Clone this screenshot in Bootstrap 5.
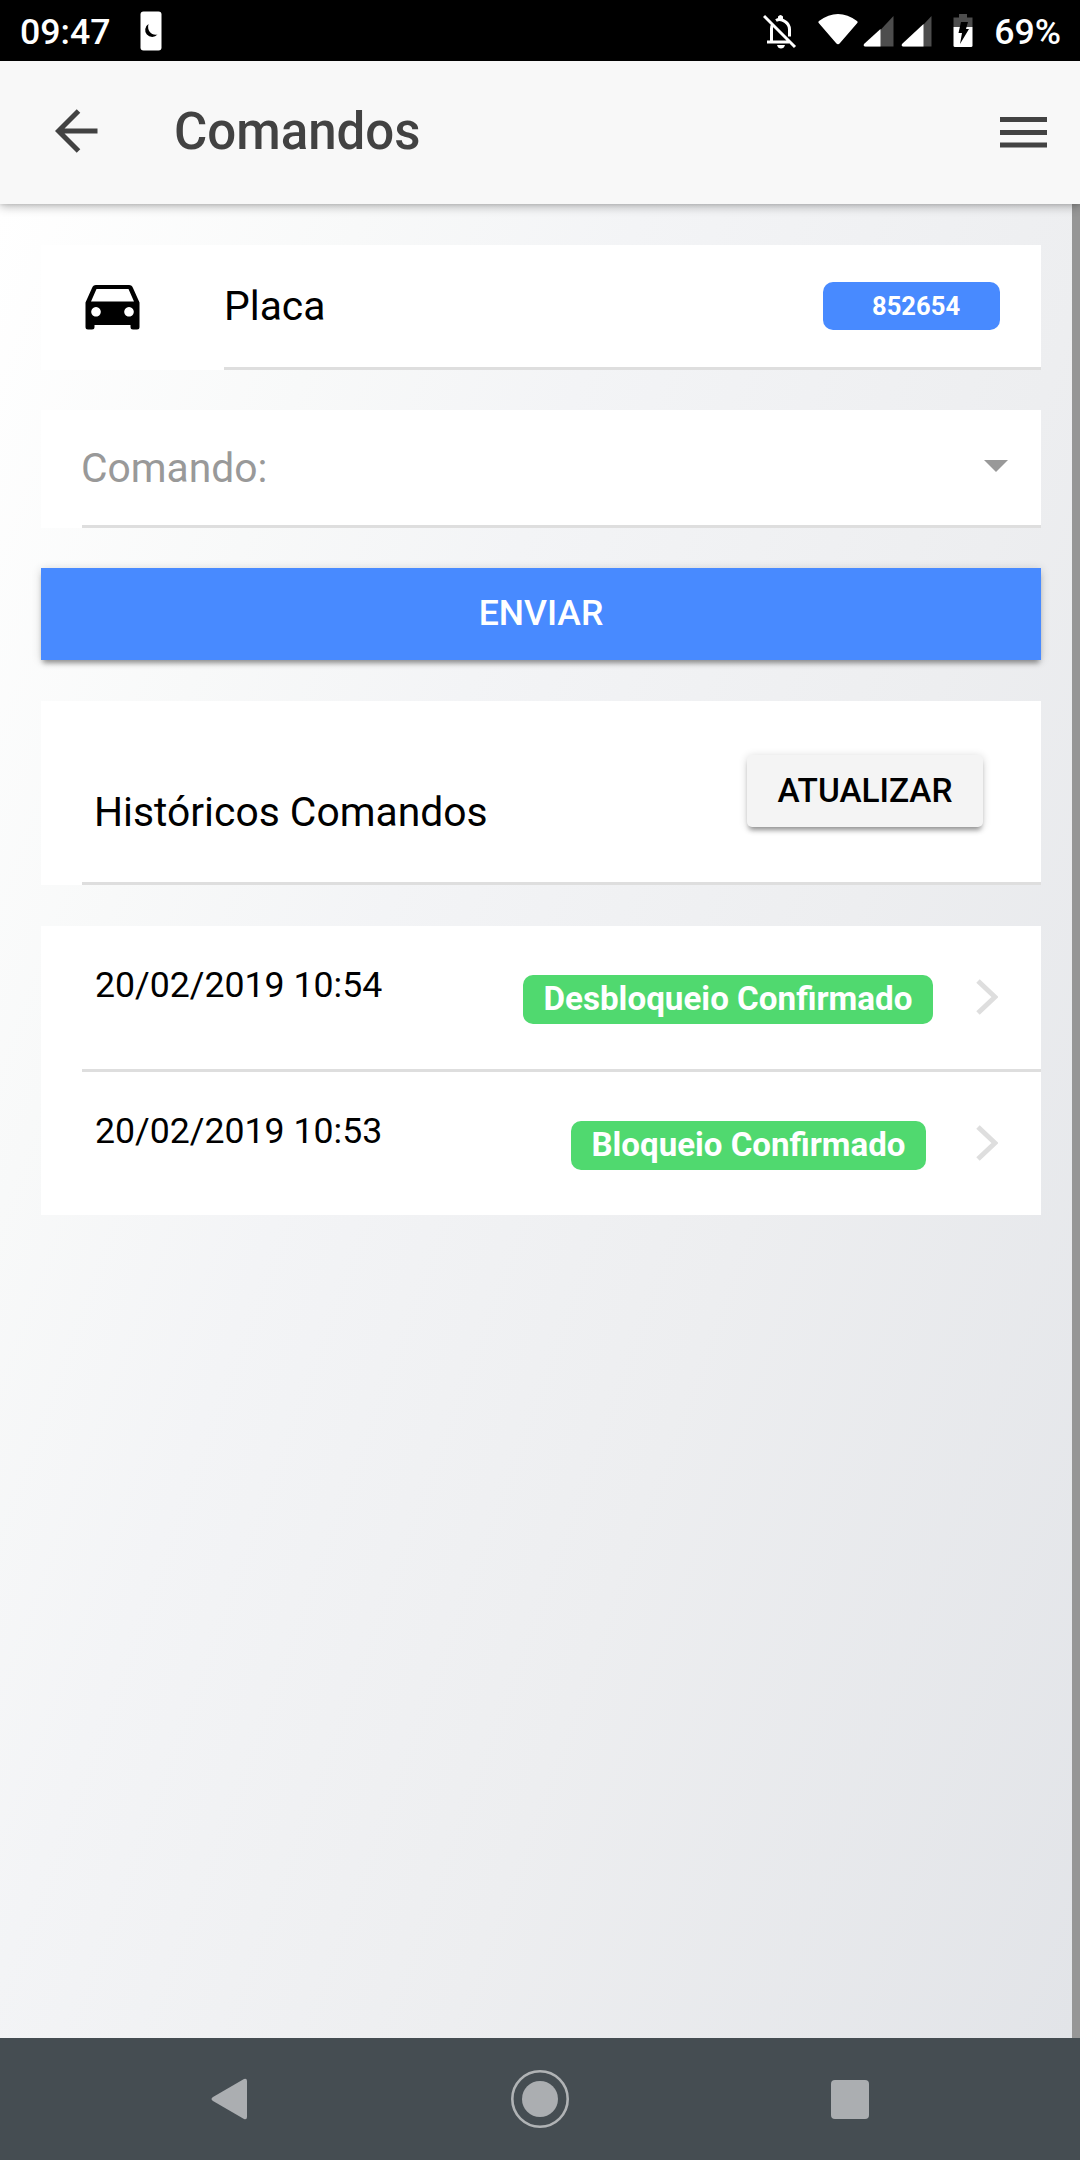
<!DOCTYPE html>
<html lang="pt-BR">
<head>
<meta charset="utf-8">
<meta name="viewport" content="width=device-width, initial-scale=1">
<title>Comandos</title>
<link href="https://cdn.jsdelivr.net/npm/bootstrap@5.3.0/dist/css/bootstrap.min.css" rel="stylesheet">
<style>
  body { font-family: Roboto, "Liberation Sans", sans-serif; color: #000; line-height: 1; overflow: hidden; }
  svg { display: block; flex: none; }
  .phone { width: 1080px; height: 2160px; }
  .statusbar { height: 61px; background: #000; color: #fff; padding: 0 19px 0 20px; font-size: 35.7px; font-weight: 500; }
  .statusbar span { margin-top: 4px; }
  .moon { margin-left: 29px; }
  .bell { margin-right: 21px; margin-top: 1px; }
  .wifi { margin-right: 5px; margin-top: -2px; }
  .sig { margin-right: 7px; margin-top: 1px; }
  .batt { margin-left: 14px; margin-right: 21px; }
  .topbar { height: 143px; background: #f8f8f8; color: #424242; padding: 0 33px 0 55px; z-index: 2;
            box-shadow: 0 2px 10px rgba(0,0,0,.3), 0 1px 3px rgba(0,0,0,.08); }
  .topbar h1 { font-size: 51px; font-weight: 500; margin: -2px 0 0 76px; }
  .back { margin-top: -4px; }
  .burger { margin-top: -1px; }
  .screen { border-right: 8px solid #969696; padding: 41px 31px 0 41px;
            background: linear-gradient(110deg, #ffffff 0%, #f8f9f9 21%, #f3f4f6 37%, #edeef0 64%, #e2e4e8 100%); }
  .panel { background: #fff; margin-bottom: 40px; font-size: 40.8px; }
  .ruled { border-bottom: 3px solid #dedede; }
  .plate { height: 125px; padding-left: 44px; }
  .plate .ruled { margin-left: 84px; padding-right: 41px; }
  .chip { border-radius: 10px; height: 48px; font-weight: 700; font-size: 33.2px; padding: 0 20.5px; color: #fff; background: #50d96f; line-height: 48px; }
  .chip-plate { width: 177px; font-size: 25.6px; background: #488aff; padding: 0 0 0 49px; line-height: 48px; }
  .inset { margin-left: 41px; }
  .picker { height: 118px; color: #999; padding-right: 33px; }
  .picker span { margin-left: -1px; margin-top: 2px; }
  .picker svg { margin-top: -3px; }
  .send { height: 92px; border: 0; border-radius: 0; background: #488aff; color: #fff; font-size: 35.6px; font-weight: 500; margin-bottom: 41px; }
  .raised { box-shadow: 0 5px 5px -2px rgba(0,0,0,.36), 0 1px 9px rgba(0,0,0,.16); }
  .history-panel { margin-bottom: 41px; }
  .history { height: 184px; padding: 0 58px 0 12px; }
  .histlabel { margin-top: 91px; }
  .refresh { width: 236px; height: 72px; border: 0; border-radius: 5px; background: #f4f4f4; color: #000; font-size: 33.4px; font-weight: 500; padding: 0; margin-top: 54px; }
  .entry { height: 146px; padding: 0 43px 0 13px; }
  .entry-last { height: 143px; }
  .stamp { font-size: 35.65px; margin-top: 42px; }
  .entry .chip { margin-top: 49px; height: 49px; margin-right: 43px; }
  .entry-last .chip { margin-right: 50px; font-size: 33.1px; }
  .entry .go { margin-top: 53px; }
  .sysnav { height: 122px; background: #454d52; padding: 0 211px; }
</style>
</head>
<body>
<div class="phone d-flex flex-column">
  <div class="statusbar d-flex align-items-center">
    <span>09:47</span>
    <svg class="moon me-auto" width="22" height="40" viewBox="0 0 22 40"><rect x=".5" y=".5" width="21" height="39" rx="3" fill="#fff"/><path d="M8.500 13a7 7 0 1 0 9 10.500c-5 1.500-11-3-9-10.500z" fill="#000"/></svg>
    <svg class="bell" width="34" height="35" viewBox="0 0 34 35" fill="none" stroke="#fff" stroke-width="3"><path d="M1 2l31 31M4 28h22M8.500 27V15q0-3 1.500-5.500M13 6.500q4-2.500 9 1 4.500 3 4.500 8v7"/><path d="M14 31h8q-1 3.500-4 3.500T14 31zM15 5V2.500q2.500-3 5 0V5z" fill="#fff" stroke="none"/></svg>
    <svg class="wifi" width="40" height="31" viewBox="0 0 40 31"><path d="M1 7Q20-7 39 7q1 1 .3 2L22 29q-2 2.500-4 0L.7 9Q0 8 1 7z" fill="#fff"/></svg>
    <svg class="sig" width="31" height="31" viewBox="0 0 31 31"><path d="M30.500 0v30.500H2z" fill="#4d4d4d"/><path d="M17.500 13v17.500H2q-2-.5-1-2.500z" fill="#fff"/></svg>
    <svg class="sig" width="31" height="31" viewBox="0 0 31 31"><path d="M30.500 0v30.500H2z" fill="#4d4d4d"/><path d="M22.500 8v22.500H2q-2-.5-1-2.500z" fill="#fff"/></svg>
    <svg class="batt" width="20" height="33" viewBox="0 0 20 33"><path d="M6 0h8v3.500h5.500V13H.5V3.500H6z" fill="#4d4d4d"/><path d="M.5 13h19v18.500q0 1.500-1.500 1.500H2q-1.500 0-1.500-1.500z" fill="#fff"/><path d="M8 8h7l-2 7h3L7 30l2-11H5.500z" fill="#000"/></svg>
    <span>69%</span>
  </div>
  <header class="topbar d-flex align-items-center position-relative">
    <svg class="back" width="43" height="44" viewBox="0 0 43 44" fill="none" stroke="#424242" stroke-width="5"><path d="M42.500 22H4M23.500 2L3.500 22l20 20"/></svg>
    <h1>Comandos</h1>
    <svg class="burger ms-auto" width="47" height="31" viewBox="0 0 47 31" fill="#424242"><path d="M0 0h47v5H0zM0 13h47v5H0zM0 25.500h47v5H0z"/></svg>
  </header>
  <main class="screen flex-grow-1">
    <section class="panel plate d-flex">
      <svg class="align-self-center" width="55" height="45" viewBox="0 0 55 45"><path fill-rule="evenodd" d="M11 0h33q3 0 4 3l6.500 14.500V42q0 2.500-2.500 2.500h-4Q45.500 44.500 45.500 42v-2h-36v2q0 2.500-2.500 2.500H3Q.5 44.500.5 42V17.500L7 3Q8 0 11 0zM11.500 4L6 16.500h43L43.500 4zM11 22a4.800 4.800 0 1 0 .01 0zM44 22a4.800 4.800 0 1 0 .01 0z"/></svg>
      <div class="ruled flex-grow-1 d-flex align-items-center justify-content-between">
        <span>Placa</span><span class="chip chip-plate">852654</span>
      </div>
    </section>
    <section class="panel d-flex">
      <div class="ruled inset picker flex-grow-1 d-flex align-items-center justify-content-between">
        <span>Comando:</span>
        <svg width="24" height="12" viewBox="0 0 24 12"><path d="M0 0h24L12 12z" fill="#999"/></svg>
      </div>
    </section>
    <button class="btn send raised w-100 d-flex align-items-center justify-content-center">ENVIAR</button>
    <section class="panel history-panel d-flex">
      <div class="ruled inset history flex-grow-1 d-flex justify-content-between">
        <span class="histlabel">Históricos Comandos</span>
        <button class="btn refresh raised">ATUALIZAR</button>
      </div>
    </section>
    <section class="panel">
      <div class="ruled inset entry d-flex">
        <span class="stamp me-auto">20/02/2019 10:54</span><span class="chip">Desbloqueio Confirmado</span>
        <svg class="go" width="22" height="36" viewBox="0 0 22 36"><path d="M2 2l17 16L2 34" fill="none" stroke="#dedede" stroke-width="5"/></svg>
      </div>
      <div class="inset entry entry-last d-flex">
        <span class="stamp me-auto">20/02/2019 10:53</span><span class="chip">Bloqueio Confirmado</span>
        <svg class="go" width="22" height="36" viewBox="0 0 22 36"><path d="M2 2l17 16L2 34" fill="none" stroke="#dedede" stroke-width="5"/></svg>
      </div>
    </section>
  </main>
  <nav class="sysnav d-flex align-items-center justify-content-between">
    <svg width="37" height="42" viewBox="0 0 37 42"><path d="M2 19L33 1q3-1 3 2v36q0 3-3 2L2 23q-3-2 0-4z" fill="#abaeb1"/></svg>
    <svg width="58" height="58" viewBox="0 0 58 58"><circle cx="29" cy="29" r="27.700" fill="none" stroke="#b0b3b5" stroke-width="2.600"/><circle cx="29" cy="29" r="18" fill="#abaeb1"/></svg>
    <svg width="38" height="39" viewBox="0 0 38 39"><rect width="38" height="39" rx="4" fill="#abaeb1"/></svg>
  </nav>
</div>
<script src="https://cdn.jsdelivr.net/npm/bootstrap@5.3.0/dist/js/bootstrap.bundle.min.js"></script>
</body>
</html>
